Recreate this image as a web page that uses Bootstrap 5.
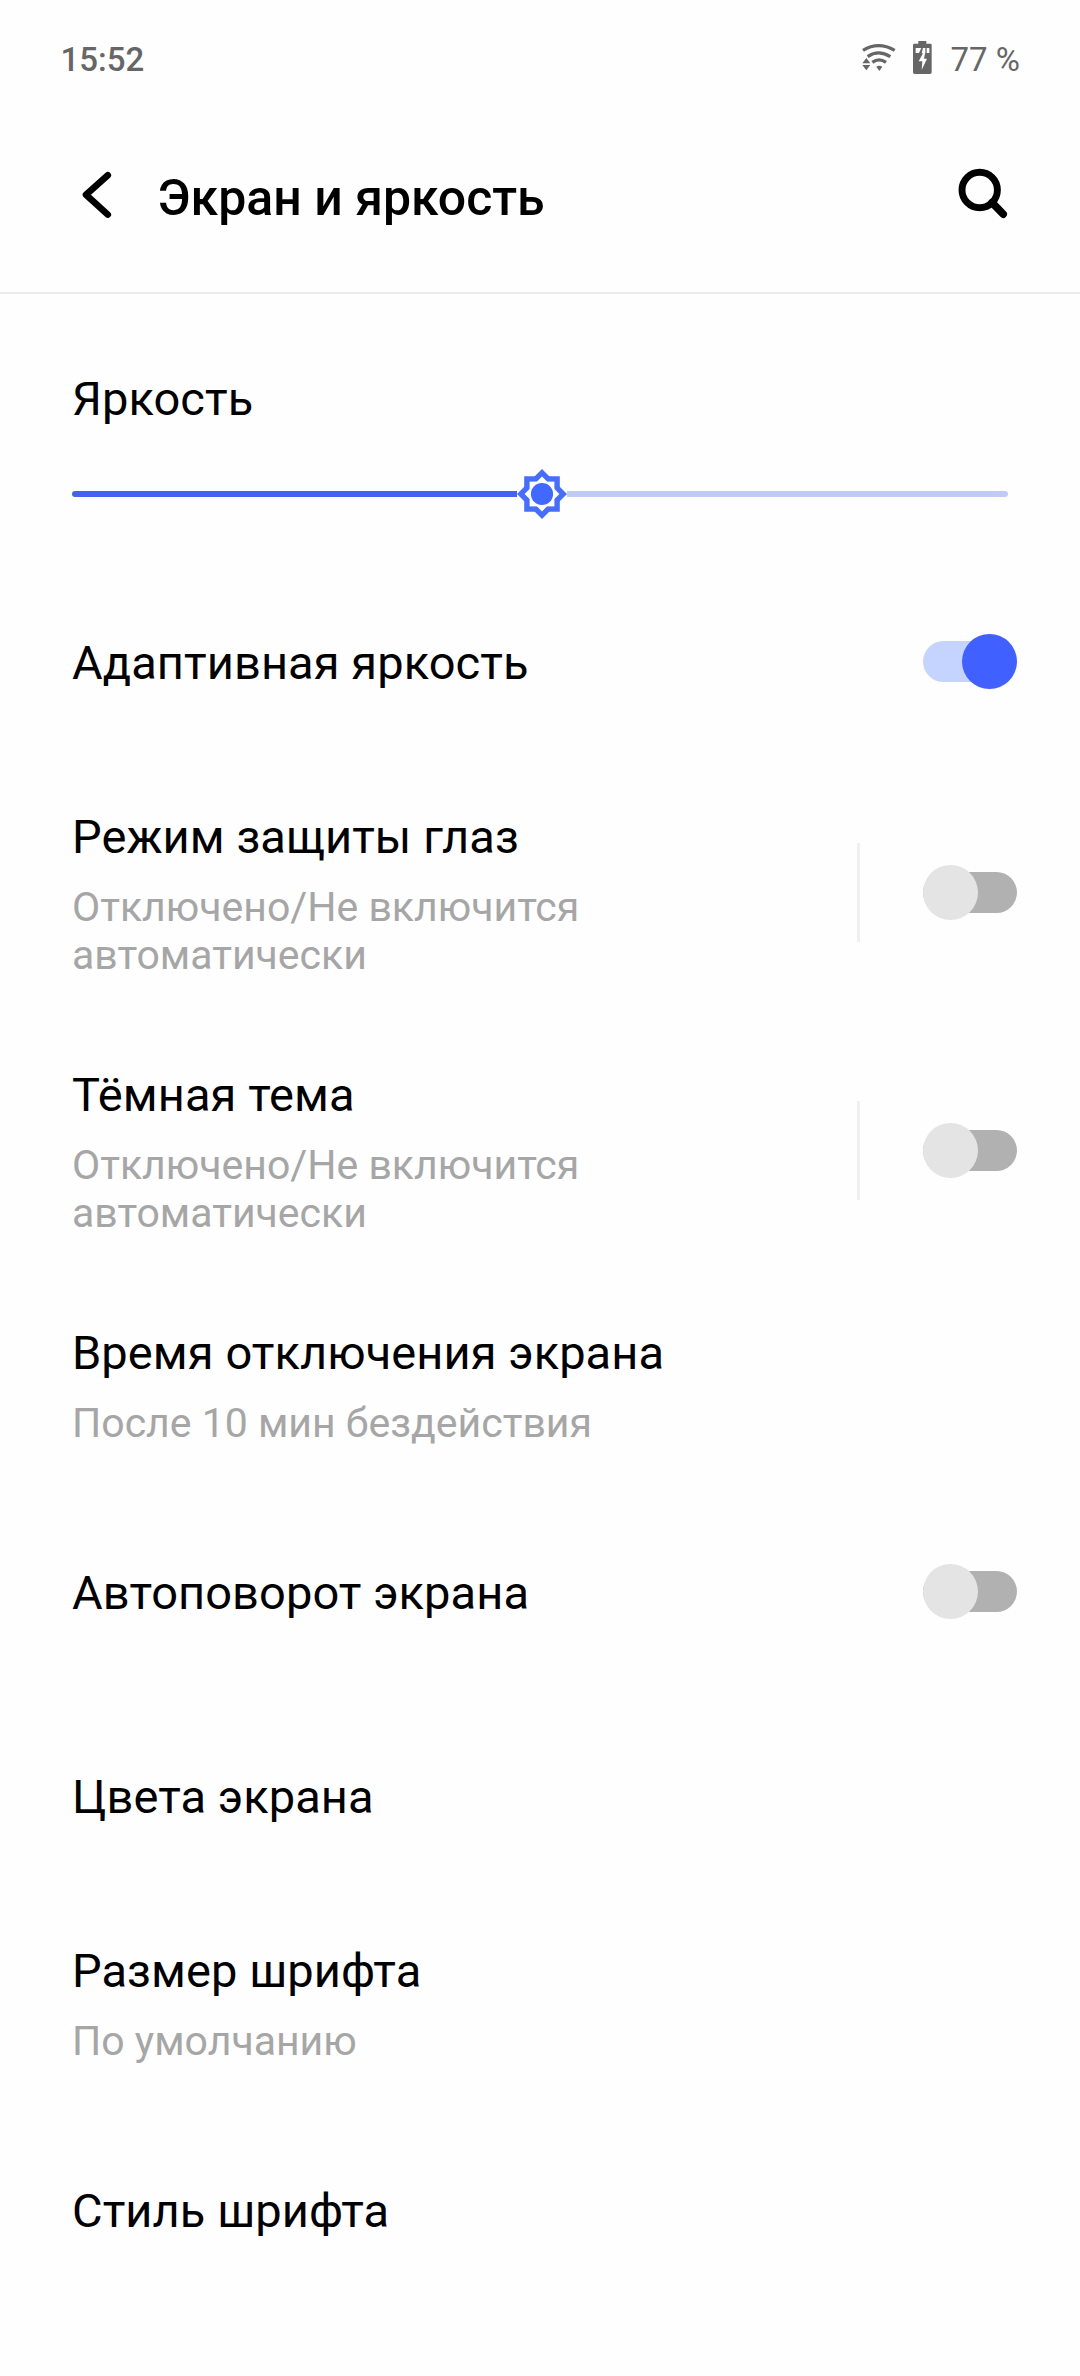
<!DOCTYPE html>
<html lang="ru">
<head>
<meta charset="utf-8">
<meta name="viewport" content="width=device-width, initial-scale=1">
<title>Экран и яркость</title>
<link href="https://cdn.jsdelivr.net/npm/bootstrap@5.3.0/dist/css/bootstrap.min.css" rel="stylesheet">
<style>
  body { font-family: Roboto, "Noto Sans", sans-serif; background: #fefefe; color: #000; min-height: 2376px; overflow-x: hidden; }
  svg { display: block; flex: none; }
  .status-bar { height: 120px; padding: 40px 60px 0 60.5px; font-size: 33px; line-height: 39px; color: #666; }
  .clock { font-weight: 500; }
  .percent { margin-left: 17.7px; }
  .app-bar { height: 174px; padding: 48px 70px 0 78px; border-bottom: 2px solid #ececec; }
  .app-title { font-size: 50px; font-weight: 500; line-height: 60px; margin: 0 0 0 39.5px; }
  .brightness { height: 265px; padding: 77px 72px 0; }
  .item-title { font-size: 47px; line-height: 56px; letter-spacing: .08px; margin: 0; font-weight: 400; }
  .item-note { font-size: 41px; line-height: 48px; color: #a6a6a6; margin: 18px 0 0; }
  .slider { margin-top: 42px; height: 50px; }
  .bar { height: 6px; }
  .bar-on { width: 445px; background: #4561ee; border-radius: 3px 0 0 3px; }
  .bar-off { background: #bfcbf5; border-radius: 0 3px 3px 0; }
  .setting { padding: 46px 63px 42px 72px; }
  .setting-single { padding-top: 76px; padding-bottom: 72px; }
  .note-wrap { max-width: 560px; }
  .split { width: 3px; height: 99px; background: #f0f0f0; margin-right: 63px; }
  /* the controls centre on the whole row, not on its padded text */
  .controls { margin: -45px 0 -42px; }
  .setting-single .controls { margin: -76px 0 -72px; }
  .toggle { width: 94px; height: 41px; border-radius: 21px; background: #b1b1b1; }
  .toggle .knob { width: 55px; height: 55px; flex: none; border-radius: 50%; background: #e4e4e4; }
  .toggle.on { background: #c5d3ff; }
  .toggle.on .knob { background: #4060ff; }
</style>
<script src="https://cdn.jsdelivr.net/npm/bootstrap@5.3.0/dist/js/bootstrap.bundle.min.js"></script>
</head>
<body>
<div class="status-bar d-flex justify-content-between align-items-start">
  <span class="clock">15:52</span>
  <div class="d-flex align-items-start">
    <svg width="72" height="36" viewBox="0 0 216 108" fill="#666" aria-hidden="true">
      <g fill="none" stroke="#666" stroke-width="10">
        <path d="M6 31Q52 3 101 31"/>
        <path d="M20 50Q52 27 88 50"/>
        <path d="M34 67Q54 52 75 67"/>
      </g>
      <path d="M46 80Q55 74 64 80L55 93Z"/>
      <path d="M4 70L16 54L28 70ZM4 75L16 91L28 75Z"/>
      <path d="M172 3h24v8h12q4 0 4 4v82q0 5-5 5h-46q-5 0-5-5V15q0-4 4-4h12Z"/>
      <path fill="#fefefe" d="M164 24h17l-7 15h-10ZM197 24h8v15h-8ZM186 24h7v16h-11ZM188 36h5l-4 20h9l-16 34 2-26h-11Z"/>
    </svg>
    <span class="percent">77 %</span>
  </div>
</div>

<header class="app-bar d-flex align-items-start">
  <svg width="40" height="54" viewBox="0 0 40 54" fill="none" stroke="#000" stroke-width="6.6" stroke-linecap="round" stroke-linejoin="round" aria-hidden="true"><path d="M29.8 7.2L8 26.7L29.8 46.6"/></svg>
  <h1 class="app-title">Экран и яркость</h1>
  <svg class="ms-auto" width="60" height="60" viewBox="950 168 60 60" fill="none" stroke="#000" aria-hidden="true"><circle cx="979.7" cy="190" r="17.7" stroke-width="6.9"/><path d="M992 202.5L1003.2 214.2" stroke-width="7.6" stroke-linecap="round"/></svg>
</header>

<main>
  <section class="brightness">
    <h2 class="item-title">Яркость</h2>
    <div class="slider d-flex align-items-center">
      <div class="bar bar-on"></div>
      <svg width="50" height="50" viewBox="-25 -25 50 50" aria-hidden="true">
        <g fill="#476ef8"><path d="M-17.8-17.8H17.8V17.8H-17.8Z"/><path d="M0-25L25 0L0 25L-25 0Z"/></g>
        <g fill="#fefefe"><path d="M-12.4-12.4H12.4V12.4H-12.4Z"/><path d="M0-17.4L17.4 0L0 17.4L-17.4 0Z"/></g>
        <circle r="11.1" fill="#4169ff"/>
      </svg>
      <div class="bar bar-off flex-grow-1"></div>
    </div>
  </section>

  <div class="setting setting-single d-flex justify-content-between align-items-center">
    <h2 class="item-title">Адаптивная яркость</h2>
    <div class="controls"><div class="toggle on d-flex align-items-center justify-content-end"><span class="knob"></span></div></div>
  </div>

  <div class="setting d-flex justify-content-between align-items-center">
    <div class="note-wrap"><h2 class="item-title">Режим защиты глаз</h2><p class="item-note">Отключено/Не включится автоматически</p></div>
    <div class="controls d-flex align-items-center"><div class="split"></div><div class="toggle d-flex align-items-center"><span class="knob"></span></div></div>
  </div>

  <div class="setting d-flex justify-content-between align-items-center">
    <div class="note-wrap"><h2 class="item-title">Тёмная тема</h2><p class="item-note">Отключено/Не включится автоматически</p></div>
    <div class="controls d-flex align-items-center"><div class="split"></div><div class="toggle d-flex align-items-center"><span class="knob"></span></div></div>
  </div>

  <div class="setting">
    <h2 class="item-title">Время отключения экрана</h2><p class="item-note">После 10 мин бездействия</p>
  </div>

  <div class="setting setting-single d-flex justify-content-between align-items-center">
    <h2 class="item-title">Автоповорот экрана</h2>
    <div class="controls"><div class="toggle d-flex align-items-center"><span class="knob"></span></div></div>
  </div>

  <div class="setting setting-single"><h2 class="item-title">Цвета экрана</h2></div>

  <div class="setting">
    <h2 class="item-title">Размер шрифта</h2><p class="item-note">По умолчанию</p>
  </div>

  <div class="setting setting-single pb-0"><h2 class="item-title">Стиль шрифта</h2></div>
</main>
</body>
</html>
